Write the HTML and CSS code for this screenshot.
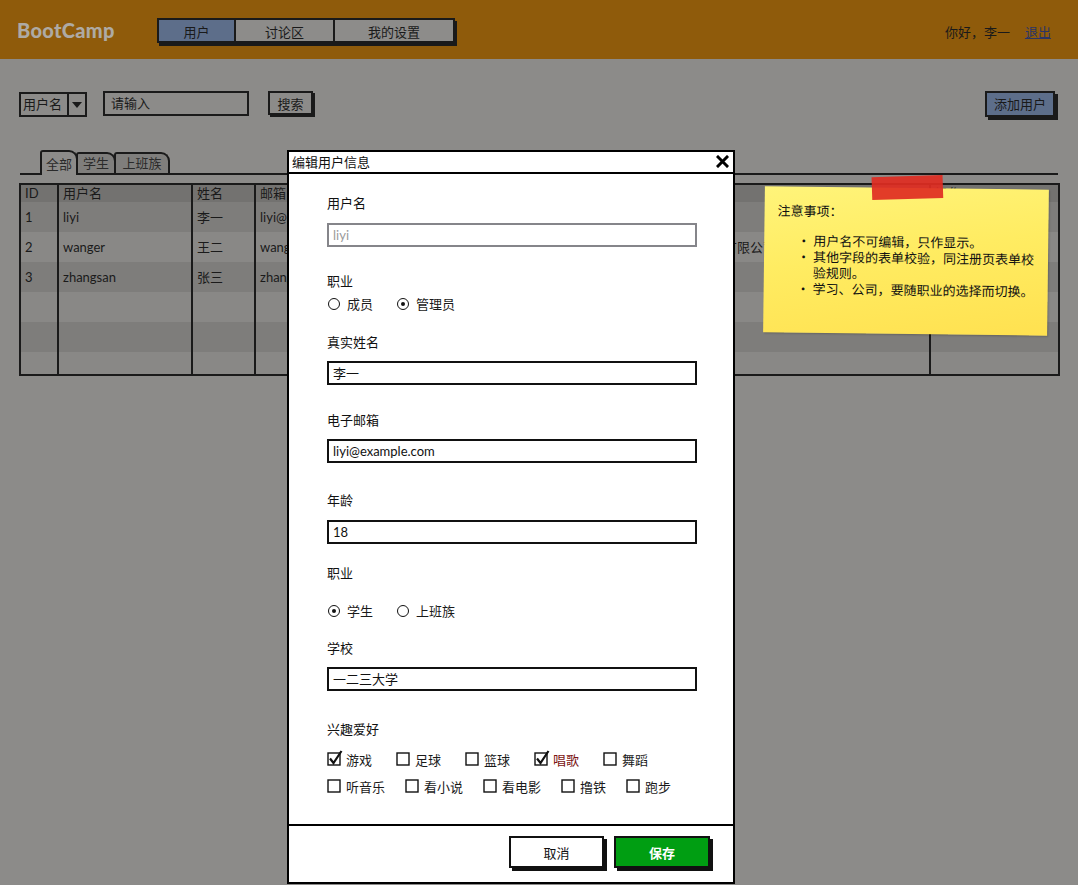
FILE: index.html
```html
<!DOCTYPE html>
<html lang="zh-CN">
<head>
<meta charset="utf-8">
<title>BootCamp - 编辑用户信息</title>
<link rel="stylesheet" href="styles.css">
</head>
<body>
<div class="page">
  <header class="topbar">
    <div class="logo">BootCamp</div>
    <nav class="seg">
      <span class="seg-item seg-a active">用户</span>
      <span class="seg-item seg-b">讨论区</span>
      <span class="seg-item seg-c">我的设置</span>
    </nav>
    <div class="user">你好，李一<a class="logout" href="#">退出</a></div>
  </header>

  <div class="toolbar">
    <div class="select"><span class="select-label">用户名</span><span class="select-arrow"><i class="tri"></i></span></div>
    <div class="search-input">请输入</div>
    <div class="btn-search">搜索</div>
    <div class="btn-add">添加用户</div>
  </div>

  <div class="tabs">
    <span class="tab tab-all active">全部</span>
    <span class="tab tab-stu">学生</span>
    <span class="tab tab-work">上班族</span>
  </div>

  <table class="grid">
    <colgroup>
      <col class="c-id"><col class="c-user"><col class="c-name"><col class="c-mail"><col class="c-job"><col class="c-org"><col class="c-op">
    </colgroup>
    <thead>
      <tr><th>ID</th><th>用户名</th><th>姓名</th><th>邮箱</th><th>职业</th><th>学校/公司</th><th>操作</th></tr>
    </thead>
    <tbody>
      <tr><td>1</td><td>liyi</td><td>李一</td><td>liyi@example.com</td><td>学生</td><td>一二三大学</td><td></td></tr>
      <tr><td>2</td><td>wanger</td><td>王二</td><td>wanger@example.com</td><td>上班族</td><td>北京某某科技有限公司</td><td></td></tr>
      <tr><td>3</td><td>zhangsan</td><td>张三</td><td>zhangsan@example.com</td><td>学生</td><td>某某大学</td><td></td></tr>
      <tr><td></td><td></td><td></td><td></td><td></td><td></td><td></td></tr>
      <tr><td></td><td></td><td></td><td></td><td></td><td></td><td></td></tr>
      <tr class="last"><td></td><td></td><td></td><td></td><td></td><td></td><td></td></tr>
    </tbody>
  </table>
</div>

<section class="modal">
  <div class="modal-title">
    <span>编辑用户信息</span>
    <svg class="close" width="13" height="13" viewBox="0 0 13 13"><path d="M2 2 L11 11 M11 2 L2 11" stroke="#000" stroke-width="3" stroke-linecap="square"/></svg>
  </div>
  <div class="modal-body">
    <div class="label first">用户名</div>
    <div class="input disabled gap-11">liyi</div>

    <div class="label gap-25">职业</div>
    <div class="radios gap-5">
      <span class="radio"><i class="dot"></i>成员</span>
      <span class="radio"><i class="dot on"></i>管理员</span>
    </div>

    <div class="label">真实姓名</div>
    <div class="input">李一</div>

    <div class="label gap-26">电子邮箱</div>
    <div class="input latin">liyi@example.com</div>

    <div class="label gap-28">年龄</div>
    <div class="input latin gap-11">18</div>

    <div class="label">职业</div>
    <div class="radios gap-20">
      <span class="radio"><i class="dot on"></i>学生</span>
      <span class="radio"><i class="dot"></i>上班族</span>
    </div>

    <div class="label gap-19">学校</div>
    <div class="input">一二三大学</div>

    <div class="label gap-29">兴趣爱好</div>
    <div class="checks row-1">
      <span class="check"><svg class="box" width="16" height="16" viewBox="0 0 16 16"><rect x="1" y="3" width="12" height="12" fill="none" stroke="#111" stroke-width="1.4"/><path d="M3 8.5 L6.5 13 L14.5 1" fill="none" stroke="#111" stroke-width="2.2"/></svg>游戏</span>
      <span class="check"><svg class="box" width="16" height="16" viewBox="0 0 16 16"><rect x="1" y="3" width="12" height="12" fill="none" stroke="#111" stroke-width="1.4"/></svg>足球</span>
      <span class="check"><svg class="box" width="16" height="16" viewBox="0 0 16 16"><rect x="1" y="3" width="12" height="12" fill="none" stroke="#111" stroke-width="1.4"/></svg>篮球</span>
      <span class="check red"><svg class="box" width="16" height="16" viewBox="0 0 16 16"><rect x="1" y="3" width="12" height="12" fill="none" stroke="#111" stroke-width="1.4"/><path d="M3 8.5 L6.5 13 L14.5 1" fill="none" stroke="#111" stroke-width="2.2"/></svg>唱歌</span>
      <span class="check"><svg class="box" width="16" height="16" viewBox="0 0 16 16"><rect x="1" y="3" width="12" height="12" fill="none" stroke="#111" stroke-width="1.4"/></svg>舞蹈</span>
    </div>
    <div class="checks row-2">
      <span class="check"><svg class="box" width="16" height="16" viewBox="0 0 16 16"><rect x="1" y="3" width="12" height="12" fill="none" stroke="#111" stroke-width="1.4"/></svg>听音乐</span>
      <span class="check"><svg class="box" width="16" height="16" viewBox="0 0 16 16"><rect x="1" y="3" width="12" height="12" fill="none" stroke="#111" stroke-width="1.4"/></svg>看小说</span>
      <span class="check"><svg class="box" width="16" height="16" viewBox="0 0 16 16"><rect x="1" y="3" width="12" height="12" fill="none" stroke="#111" stroke-width="1.4"/></svg>看电影</span>
      <span class="check"><svg class="box" width="16" height="16" viewBox="0 0 16 16"><rect x="1" y="3" width="12" height="12" fill="none" stroke="#111" stroke-width="1.4"/></svg>撸铁</span>
      <span class="check"><svg class="box" width="16" height="16" viewBox="0 0 16 16"><rect x="1" y="3" width="12" height="12" fill="none" stroke="#111" stroke-width="1.4"/></svg>跑步</span>
    </div>
  </div>
  <div class="modal-footer">
    <button class="btn btn-cancel">取消</button>
    <button class="btn btn-save">保存</button>
  </div>
</section>

<aside class="note">
  <span class="tape"></span>
  <div class="note-title">注意事项：</div>
  <ul class="note-list">
    <li>用户名不可编辑，只作显示。</li>
    <li>其他字段的表单校验，同注册页表单校验规则。</li>
    <li>学习、公司，要随职业的选择而切换。</li>
  </ul>
</aside>
</body>
</html>
```

FILE: styles.css
```css
* { box-sizing: border-box; }
html, body { margin: 0; padding: 0; }
body {
  width: 1078px;
  height: 885px;
  overflow: hidden;
  position: relative;
  background: #8c8b89;
  font-family: "Noto Sans CJK SC", "Noto Sans", sans-serif;
  font-size: 13px;
  color: #1a1a1a;
}

/* ---------- header ---------- */
.topbar {
  height: 59px;
  background: #8f5b0b;
  display: flex;
  align-items: center;
  padding: 0 27px 0 17px;
}
.logo {
  width: 140px;
  font-family: Lato, "DejaVu Sans", sans-serif;
  font-weight: 900;
  font-size: 20px;
  color: #aeaaa4;
  letter-spacing: 0.3px;
}
.seg {
  display: flex;
  height: 25px;
  margin-top: 1px;
  border: 2px solid #1a1a1a;
  box-shadow: 2px 3px 0 #1a1a1a;
}
.seg-item {
  display: flex;
  align-items: center;
  justify-content: center;
  background: #8d8c8a;
  border-right: 2px solid #1a1a1a;
  line-height: 21px;
  padding-top: 2px;
}
.seg-item.active { background: #5d6e8a; }
.seg-a { width: 77px; }
.seg-b { width: 99px; }
.seg-c { width: 118px; border-right: none; }
.user {
  margin-left: auto;
  margin-top: 3px;
  color: #1a1a1a;
}
.logout {
  margin-left: 15px;
  color: #2b3566;
  text-decoration: underline;
}

/* ---------- toolbar ---------- */
.toolbar {
  display: flex;
  align-items: flex-start;
  height: 26px;
  margin-top: 32px;
  padding: 0 23px 0 19px;
}
.select {
  display: flex;
  width: 68px;
  height: 25px;
  margin-top: 1px;
  border: 2px solid #1a1a1a;
}
.select-label {
  flex: 1;
  padding-left: 2px;
  line-height: 20px;
}
.select-arrow {
  width: 18px;
  border-left: 2px solid #1a1a1a;
  display: flex;
  align-items: center;
  justify-content: center;
}
.tri {
  width: 0; height: 0;
  border-left: 5px solid transparent;
  border-right: 5px solid transparent;
  border-top: 6px solid #1a1a1a;
}
.search-input {
  width: 146px;
  height: 25px;
  margin-left: 16px;
  border: 2px solid #1a1a1a;
  padding-left: 6px;
  line-height: 19px;
}
.btn-search {
  width: 45px;
  height: 24px;
  margin-left: 19px;
  border: 2px solid #1a1a1a;
  box-shadow: 2px 2px 0 #1a1a1a;
  text-align: center;
  line-height: 21px;
}
.btn-add {
  margin-left: auto;
  width: 70px;
  height: 26px;
  background: #5d6e8a;
  border: 2px solid #1a1a1a;
  box-shadow: 3px 3px 0 #1a1a1a;
  text-align: center;
  line-height: 22px;
}

/* ---------- tabs ---------- */
.tabs {
  display: flex;
  align-items: flex-end;
  height: 25px;
  margin: 33px 20px 0 20px;
  padding-left: 20px;
  border-bottom: 2px solid #1a1a1a;
}
.tab {
  height: 21px;
  margin-right: -2px;
  border: 2px solid #1a1a1a;
  border-bottom: none;
  border-radius: 3px 9px 0 0;
  background: #7f7e7c;
  text-align: center;
  line-height: 17px;
  color: #2a2a2a;
}
.tab.active {
  height: 25px;
  margin-bottom: -2px;
  background: #8c8b89;
  line-height: 24px;
  position: relative;
  z-index: 1;
}
.tab-all { width: 38px; }
.tab-stu { width: 40px; }
.tab-work { width: 56px; }

/* ---------- table ---------- */
.grid {
  margin: 8px 0 0 19px;
  width: 1039px;
  table-layout: fixed;
  border-collapse: collapse;
  border: 2px solid #1a1a1a;
  font-family: Lato, "Noto Sans CJK SC", sans-serif;
  font-size: 13px;
  color: #1a1a1a;
}
.c-id { width: 38px; }
.c-user { width: 134px; }
.c-name { width: 63px; }
.c-mail { width: 206px; }
.c-job { width: 180px; }
.c-org { width: 289px; }
.c-op { width: 129px; }
.grid th, .grid td {
  border-left: 2px solid #1a1a1a;
  padding: 0 0 0 4px;
  text-align: left;
  font-weight: normal;
  white-space: nowrap;
  overflow: hidden;
}
.grid th {
  height: 17px;
  line-height: 17px;
  background: #737270;
}
.grid td { height: 30px; line-height: 16px; padding-bottom: 1px; }
.grid tbody tr:nth-child(odd) { background: #7e7d7b; }
.grid tbody tr:nth-child(even) { background: #898886; }
.grid tbody tr.last td { height: 23px; }

/* ---------- modal ---------- */
.modal {
  position: absolute;
  left: 287px;
  top: 150px;
  width: 448px;
  height: 734px;
  background: #fff;
  border: 2px solid #000;
  display: flex;
  flex-direction: column;
  z-index: 5;
}
.modal-title {
  height: 22px;
  border-bottom: 2px solid #000;
  display: flex;
  align-items: center;
  justify-content: space-between;
  padding: 0 4px 0 3px;
  line-height: 18px;
  color: #111;
}
.close { display: block; margin-top: -1px; }
.modal-body {
  flex: 1;
  padding: 20px 0 0 38px;
}
.label {
  line-height: 18px;
  margin-top: 20px;
  color: #111;
}
.label.first { margin-top: 0; }
.input {
  width: 370px;
  height: 24px;
  margin-top: 10px;
  border: 2px solid #111;
  padding-left: 4px;
  line-height: 19px;
  color: #111;
}
.input.latin { font-family: Lato, "Noto Sans CJK SC", sans-serif; line-height: 20px; }
.input.disabled {
  border-color: #85858a;
  color: #9a9a9a;
  font-family: Lato, "Noto Sans CJK SC", sans-serif;
  line-height: 20px;
}
.gap-5 { margin-top: 5px; }
.gap-11 { margin-top: 11px; }
.gap-19 { margin-top: 19px; }
.gap-20 { margin-top: 20px; }
.gap-25 { margin-top: 25px; }
.gap-26 { margin-top: 26px; }
.gap-28 { margin-top: 28px; }
.gap-29 { margin-top: 29px; }

.radios {
  display: flex;
  gap: 24px;
  height: 18px;
  line-height: 18px;
  padding-left: 1px;
}
.radio {
  display: flex;
  align-items: center;
  gap: 7px;
}
.dot {
  width: 12px;
  height: 12px;
  border: 1.5px solid #111;
  border-radius: 50%;
  position: relative;
}
.dot.on::after {
  content: "";
  position: absolute;
  left: 2.5px; top: 2.5px;
  width: 4px; height: 4px;
  border-radius: 50%;
  background: #111;
}

.checks {
  display: flex;
  height: 18px;
  line-height: 18px;
  margin-top: 13px;
}
.checks.row-1 { gap: 24px; }
.checks.row-2 { gap: 20px; margin-top: 9px; }
.check {
  display: flex;
  align-items: center;
  gap: 3px;
}
.check .box { display: block; margin-top: -4px; }
.check.red { color: #7c1414; }

.modal-footer {
  height: 58px;
  border-top: 2px solid #000;
  display: flex;
  justify-content: flex-end;
  align-items: flex-start;
  gap: 10px;
  padding: 10px 23px 0 0;
}
.btn {
  width: 95px;
  height: 32px;
  border: 2px solid #111;
  box-shadow: 3px 3px 0 #111;
  font-family: "Noto Sans CJK SC", sans-serif;
  font-size: 13px;
  padding: 0;
  cursor: pointer;
}
.btn-cancel { background: #fff; color: #111; }
.btn-save { width: 96px; background: #009e12; color: #fff; font-weight: 700; }

/* ---------- sticky note ---------- */
.note {
  position: absolute;
  left: 764px;
  top: 188px;
  width: 284px;
  height: 146px;
  padding: 16px 10px 0 13px;
  background: linear-gradient(172deg, #fff47a 0%, #ffec62 45%, #ffe150 100%);
  box-shadow: 1px 1px 2px rgba(0,0,0,0.2);
  transform: rotate(0.7deg);
  z-index: 6;
  font-size: 13px;
  line-height: 16px;
  color: #111;
}
.tape {
  position: absolute;
  left: 107px;
  top: -12px;
  width: 71px;
  height: 23px;
  background: rgba(224, 44, 34, 0.92);
  transform: rotate(-2.5deg);
}
.note-title { height: 16px; }
.note-list {
  list-style: none;
  margin: 14px 0 0 0;
  padding: 0 0 0 36px;
  width: 261px;
}
.note-list li { position: relative; }
.note-list li::before {
  content: "·";
  position: absolute;
  left: -16px;
  top: 0;
}
```
